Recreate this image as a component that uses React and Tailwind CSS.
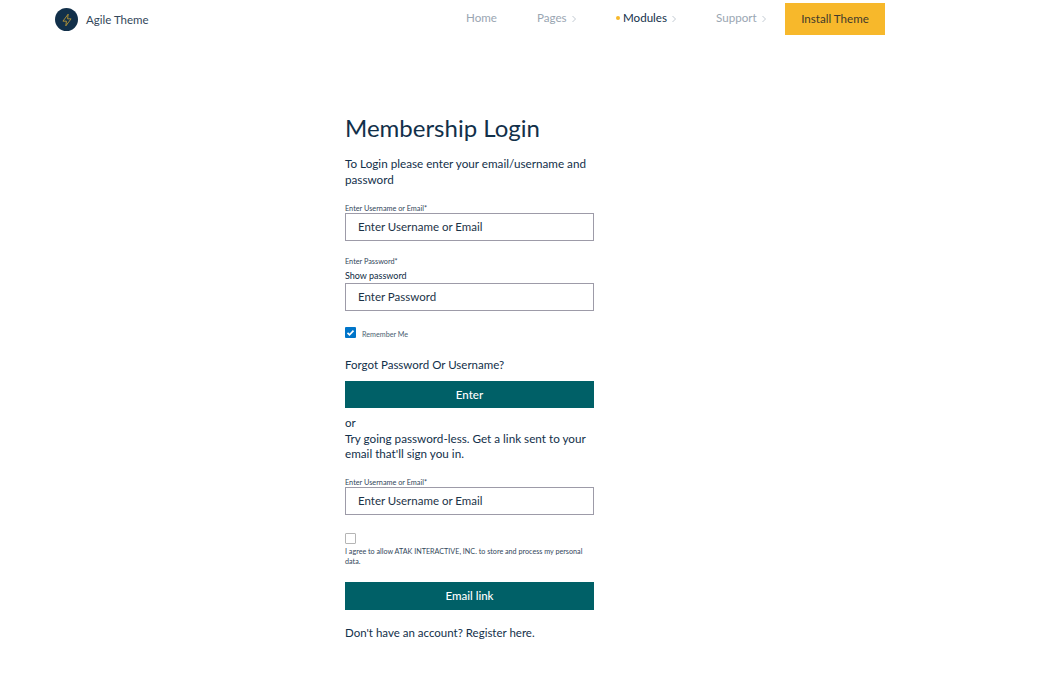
const Field = ({ label, placeholder, extra }) => (
  <div>
    <p className="text-[7.3px] leading-[8px] text-[#33475b]">{label}</p>
    {extra && <p className="mt-[4px] mb-[2px] text-[9px] leading-[11px] text-[#0e2a3f]">{extra}</p>}
    <div className="h-[28px] border border-[#9d9ba8] bg-white pl-[12px] text-[11.5px] leading-[26px] text-[#1c3347]">
      {placeholder}
    </div>
  </div>
);

const Chevron = () => (
  <svg width="6" height="8" viewBox="0 0 6 8" fill="none" stroke="#c3cbd3" strokeWidth="1" className="ml-[4px] mt-[2px]">
    <path d="M1.5 1l3 3-3 3" />
  </svg>
);

const Navbar = () => (
  <div className="flex h-[38px] items-start justify-between pl-[55px] pr-[162px]">
    {/* Logo */}
    <div className="flex items-center gap-2 pt-[8px]">
      <div className="flex h-[23px] w-[23px] items-center justify-center rounded-full bg-[#12304a]">
        <svg width="14" height="14" viewBox="0 0 24 24" fill="none" stroke="#c9a032" strokeWidth="1.4" strokeLinejoin="round">
          <path d="M14 2L5 14h6l-1 8 9-12h-6l1-8z" />
        </svg>
      </div>
      <span className="text-[11.5px] text-[#33475b]">Agile Theme</span>
    </div>

    {/* Links */}
    <div className="flex items-start text-[11.6px] leading-[14px]">
      <a className="mt-[11px] w-[71px] text-[#9aa6b2]">Home</a>
      <a className="mt-[11px] flex w-[79px] items-center text-[#9aa6b2]">Pages<Chevron /></a>
      <a className="mt-[11px] flex w-[100px] items-center text-[#12304a]">
        <span className="mr-[3px] h-[4px] w-[4px] rounded-full bg-[#f7b82b]" />
        Modules<Chevron />
      </a>
      <a className="mt-[11px] flex w-[69px] items-center text-[#9aa6b2]">Support<Chevron /></a>
      <button className="mt-[3px] h-[32px] w-[100px] bg-[#f7b82b] text-[11.6px] text-[#3f3a2c]">Install Theme</button>
    </div>
  </div>
);

export default function App() {
  return (
    <div className="min-h-[687px] bg-white font-['Lato','Liberation_Sans',sans-serif]">
      <Navbar />

      <div className="ml-[345px] w-[249px]">
        <h1 className="mt-[75px] text-[24px] leading-[30px] font-normal text-[#12304a]">Membership Login</h1>

        <p className="mt-[12px] text-[11.7px] leading-[16px] text-[#12304a]">
          To Login please enter your email/username and password
        </p>

        <div className="mt-[18px]">
          <Field label="Enter Username or Email*" placeholder="Enter Username or Email" />
        </div>
        <div className="mt-[17px]">
          <Field label="Enter Password*" extra="Show password" placeholder="Enter Password" />
        </div>

        <div className="mt-[13px] flex items-center">
          <span className="flex h-[11px] w-[11px] items-center justify-center rounded-[1px] bg-[#0075c9]">
            <svg width="9" height="9" viewBox="0 0 12 12" fill="none" stroke="white" strokeWidth="2.2">
              <path d="M2 6.5l2.7 2.7L10 3.5" />
            </svg>
          </span>
          <span className="ml-[6px] mt-[6px] text-[7.2px] text-[#4a5f73]">Remember Me</span>
        </div>

        <p className="mt-[16px] text-[11.5px] leading-[16px] text-[#12304a]">Forgot Password Or Username?</p>

        <button className="mt-[8px] block h-[27px] w-full bg-[#006067] text-[11.5px] font-medium text-white">Enter</button>

        <p className="mt-[7px] text-[11.5px] leading-[16px] text-[#12304a]">or</p>
        <p className="text-[11.7px] leading-[15.5px] text-[#12304a]">
          Try going password-less. Get a link sent to your email that'll sign you in.
        </p>

        <div className="mt-[17px]">
          <Field label="Enter Username or Email*" placeholder="Enter Username or Email" />
        </div>

        <div className="mt-[18px] h-[11px] w-[11px] rounded-[1px] border border-[#b5b5b5] bg-white" />
        <p className="mt-[3px] text-[7.2px] leading-[10px] text-[#33475b]">
          I agree to allow ATAK INTERACTIVE, INC. to store and process my personal data.
        </p>

        <button className="mt-[15px] block h-[28px] w-full bg-[#006067] text-[11.5px] font-medium text-white">Email link</button>

        <p className="mt-[15px] text-[11.5px] leading-[16px] text-[#12304a]">Don't have an account? Register here.</p>
      </div>
    </div>
  );
}
